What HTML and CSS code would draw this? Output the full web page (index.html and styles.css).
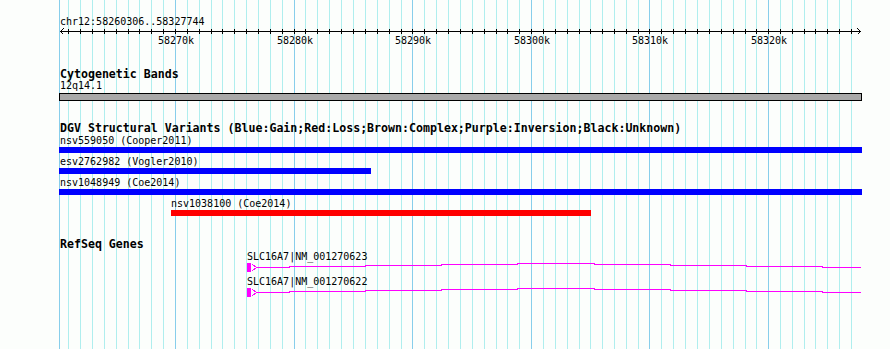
FILE: index.html
```html
<!DOCTYPE html>
<html lang="en">

<head>
  <meta charset="UTF-8">
  <meta name="viewport" content="width=device-width, initial-scale=1.0">
  <title>chr12:58260306..58327744</title>
  <link rel="stylesheet" href="styles.css">
</head>

<body>
  <div class="browser">
    <!-- grid: one line per kb, darker every 10kb -->
    <svg class="grid" width="890" height="349">
      <path class="grid-minor" d="M68.5 0V349M80.5 0V349M92.5 0V349M104.5 0V349M116.5 0V349M128.5 0V349M139.5 0V349M151.5 0V349M163.5 0V349M187.5 0V349M199.5 0V349M211.5 0V349M222.5 0V349M234.5 0V349M246.5 0V349M258.5 0V349M270.5 0V349M282.5 0V349M305.5 0V349M317.5 0V349M329.5 0V349M341.5 0V349M353.5 0V349M365.5 0V349M377.5 0V349M389.5 0V349M401.5 0V349M424.5 0V349M436.5 0V349M448.5 0V349M460.5 0V349M472.5 0V349M484.5 0V349M496.5 0V349M507.5 0V349M519.5 0V349M543.5 0V349M555.5 0V349M567.5 0V349M579.5 0V349M590.5 0V349M602.5 0V349M614.5 0V349M626.5 0V349M638.5 0V349M661.5 0V349M673.5 0V349M685.5 0V349M697.5 0V349M709.5 0V349M721.5 0V349M733.5 0V349M745.5 0V349M756.5 0V349M780.5 0V349M792.5 0V349M804.5 0V349M815.5 0V349M827.5 0V349M839.5 0V349M851.5 0V349" />
      <path class="grid-major" d="M59.5 0V349M175.5 0V349M294.5 0V349M412.5 0V349M531.5 0V349M649.5 0V349M768.5 0V349" />
    </svg>

    <div class="panel">
      <div class="location">chr12:58260306..58327744</div>

      <svg class="ruler" width="890" height="22">
        <path d="M60 4.5H861M63.5 1.5L60.5 4.5L63.5 7.5M857.5 1.5L860.5 4.5L857.5 7.5" />
        <path d="M68.5 2v5M80.5 2v5M92.5 2v5M104.5 2v5M116.5 2v5M128.5 2v5M139.5 2v5M151.5 2v5M163.5 2v5M175.5 2v5M187.5 2v5M199.5 2v5M211.5 2v5M222.5 2v5M234.5 2v5M246.5 2v5M258.5 2v5M270.5 2v5M282.5 2v5M294.5 2v5M305.5 2v5M317.5 2v5M329.5 2v5M341.5 2v5M353.5 2v5M365.5 2v5M377.5 2v5M389.5 2v5M401.5 2v5M412.5 2v5M424.5 2v5M436.5 2v5M448.5 2v5M460.5 2v5M472.5 2v5M484.5 2v5M496.5 2v5M507.5 2v5M519.5 2v5M531.5 2v5M543.5 2v5M555.5 2v5M567.5 2v5M579.5 2v5M590.5 2v5M602.5 2v5M614.5 2v5M626.5 2v5M638.5 2v5M649.5 2v5M661.5 2v5M673.5 2v5M685.5 2v5M697.5 2v5M709.5 2v5M721.5 2v5M733.5 2v5M745.5 2v5M756.5 2v5M768.5 2v5M780.5 2v5M792.5 2v5M804.5 2v5M815.5 2v5M827.5 2v5M839.5 2v5M851.5 2v5" />
        <text x="176" y="17">58270k</text>
        <text x="295" y="17">58280k</text>
        <text x="413" y="17">58290k</text>
        <text x="532" y="17">58300k</text>
        <text x="650" y="17">58310k</text>
        <text x="769" y="17">58320k</text>
      </svg>

      <section class="track track-bands">
        <div class="track-title">Cytogenetic Bands</div>
        <div class="feature-label" style="margin-left:60px">12q14.1</div>
        <div class="band" style="margin-left:59px;width:803px"></div>
      </section>

      <section class="track track-dgv">
        <div class="track-title">DGV Structural Variants (Blue:Gain;Red:Loss;Brown:Complex;Purple:Inversion;Black:Unknown)</div>
        <div class="variant">
          <div class="feature-label" style="margin-left:60px">nsv559050 (Cooper2011)</div>
          <div class="bar gain" style="margin-left:59px;width:803px"></div>
        </div>
        <div class="variant">
          <div class="feature-label" style="margin-left:60px">esv2762982 (Vogler2010)</div>
          <div class="bar gain" style="margin-left:59px;width:312px"></div>
        </div>
        <div class="variant">
          <div class="feature-label" style="margin-left:60px">nsv1048949 (Coe2014)</div>
          <div class="bar gain" style="margin-left:59px;width:803px"></div>
        </div>
        <div class="variant">
          <div class="feature-label" style="margin-left:171px">nsv1038100 (Coe2014)</div>
          <div class="bar loss" style="margin-left:171px;width:420px"></div>
        </div>
      </section>

      <section class="track track-genes">
        <div class="track-title">RefSeq Genes</div>
        <div class="gene">
          <div class="feature-label" style="margin-left:247px">SLC16A7|NM_001270623</div>
          <svg class="transcript" width="890" height="10">
            <rect x="247" y="1" width="4" height="9" />
            <path d="M252.5 2.5L256.5 5.5L252.5 8.5" />
            <path d="M257 5.5H289V4.5H365V3.5H441V2.5H517V1.5H594V2.5H670V3.5H746V4.5H822V5.5H861" />
          </svg>
        </div>
        <div class="gene">
          <div class="feature-label" style="margin-left:247px">SLC16A7|NM_001270622</div>
          <svg class="transcript" width="890" height="10">
            <rect x="247" y="1" width="4" height="9" />
            <path d="M252.5 2.5L256.5 5.5L252.5 8.5" />
            <path d="M257 5.5H289V4.5H365V3.5H441V2.5H517V1.5H594V2.5H670V3.5H746V4.5H822V5.5H861" />
          </svg>
        </div>
      </section>
    </div>
  </div>
</body>

</html>
```

FILE: styles.css
```css
:root {
  --background-color: #fcfefc;
  --grid-minor: #afeeee;
  --grid-major: #87ceeb;
  --band-color: #a9a9a9;
  --gain-color: #0000ff;
  --loss-color: #ff0000;
  --gene-color: #ff00ff;
}

body {
  margin: 0;
  padding: 0;
  background-color: var(--background-color);
  font-family: "DejaVu Sans Mono", monospace;
  color: #000;
}

.browser {
  position: relative;
  width: 890px;
  height: 349px;
  overflow: hidden;
}

.grid {
  position: absolute;
  top: 0;
  left: 0;
}

.grid path {
  fill: none;
  shape-rendering: crispEdges;
}

.grid-minor {
  stroke: var(--grid-minor);
}

.grid-major {
  stroke: var(--grid-major);
}

.panel {
  position: relative;
}

.location {
  padding: 16px 0 0 60px;
  font-size: 10px;
  line-height: 11px;
}

.ruler {
  display: block;
}

.ruler path {
  fill: none;
  stroke: #000;
  shape-rendering: crispEdges;
}

.ruler text {
  font-family: "DejaVu Sans Mono", monospace;
  font-size: 10px;
  text-anchor: middle;
}

.track-title {
  padding-left: 60px;
  font-size: 11.6px;
  font-weight: bold;
  line-height: 12px;
  white-space: nowrap;
}

.feature-label {
  font-size: 10px;
  line-height: 11px;
  white-space: nowrap;
}

.track-bands {
  margin-top: 19px;
}

.band {
  box-sizing: border-box;
  height: 8px;
  margin-top: 2px;
  border: 1px solid #000;
  background-color: var(--band-color);
}

.track-dgv {
  margin-top: 21px;
}

.variant {
  padding: 1px 0 2px;
}

.bar {
  height: 6px;
  margin-top: 1px;
}

.bar.gain {
  background-color: var(--gain-color);
}

.bar.loss {
  background-color: var(--loss-color);
}

.track-genes {
  margin-top: 20px;
}

.gene {
  padding: 1px 0 3px;
}

.transcript {
  display: block;
}

.transcript rect {
  fill: var(--gene-color);
}

.transcript path {
  fill: none;
  stroke: var(--gene-color);
  shape-rendering: crispEdges;
}
```
